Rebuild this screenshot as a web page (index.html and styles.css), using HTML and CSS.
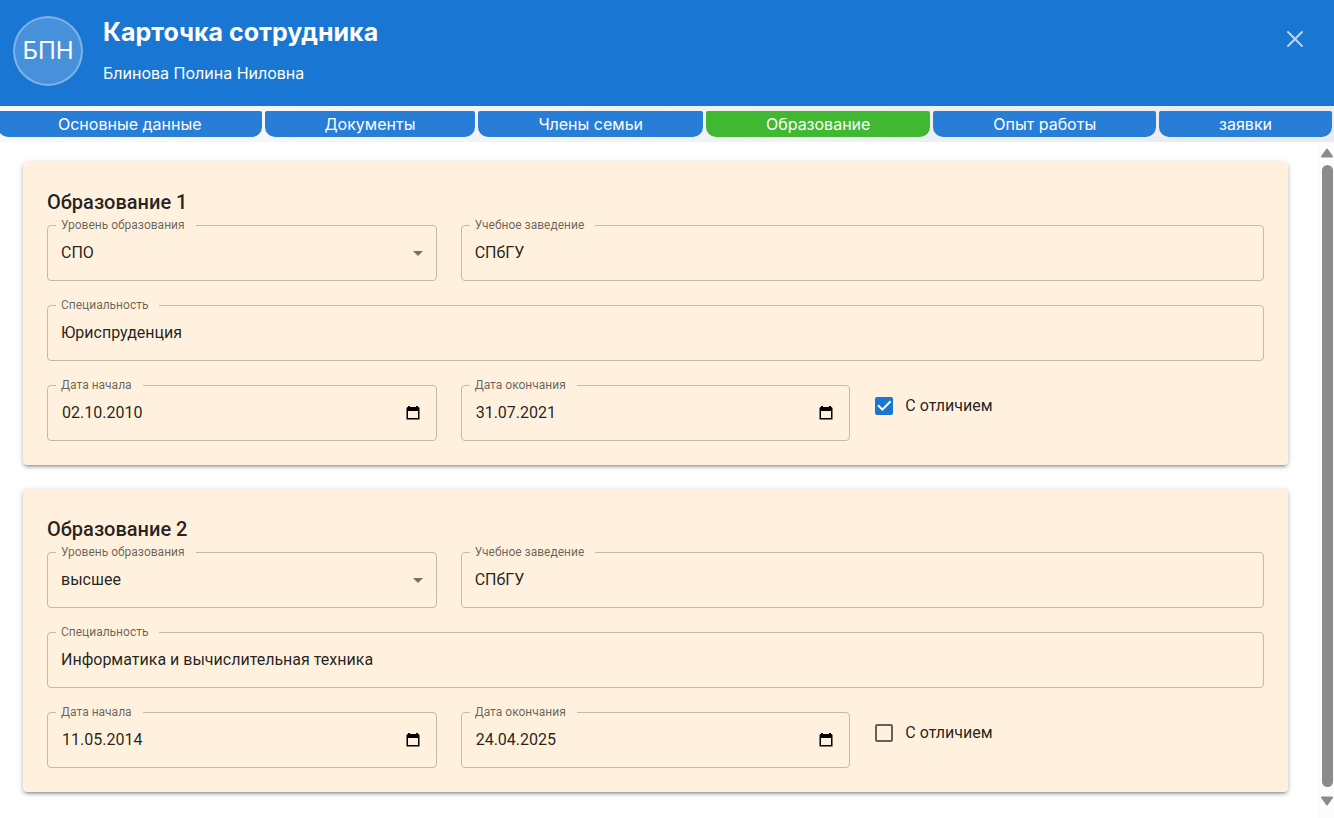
FILE: index.html
```html
<!DOCTYPE html>
<html lang="ru">
<head>
<meta charset="utf-8">
<title>Карточка сотрудника</title>
<link rel="stylesheet" href="styles.css">
</head>
<body>
<header class="header">
  <div class="avatar">БПН</div>
  <div class="person">
    <h1 class="title">Карточка сотрудника</h1>
    <p class="name">Блинова Полина Ниловна</p>
  </div>
  <button class="close" type="button" aria-label="Закрыть">
    <svg width="18" height="18" viewBox="0 0 18 18" fill="none" stroke="currentColor" stroke-width="2" stroke-linecap="round"><path d="M2 2l14 14M16 2L2 16"/></svg>
  </button>
</header>
<nav class="tabbar">
  <div class="tabs">
    <button class="tab" type="button">Основные данные</button>
    <button class="tab" type="button">Документы</button>
    <button class="tab" type="button">Члены семьи</button>
    <button class="tab active" type="button">Образование</button>
    <button class="tab" type="button">Опыт работы</button>
    <button class="tab" type="button">заявки</button>
  </div>
</nav>
<main class="main">
  <div class="cards">
    <section class="card">
      <h2 class="card-title">Образование 1</h2>
      <div class="grid">
        <fieldset class="field">
          <legend class="legend"><label for="level1">Уровень образования</label></legend>
          <div class="control">
            <select class="input" id="level1"><option>СПО</option><option>высшее</option></select>
            <svg class="arrow" width="24" height="24" viewBox="0 0 24 24"><path d="M7 10l5 5 5-5z"/></svg>
          </div>
        </fieldset>
        <fieldset class="field wide">
          <legend class="legend"><label for="school1">Учебное заведение</label></legend>
          <div class="control"><input class="input text" id="school1" type="text" value="СПбГУ"></div>
        </fieldset>
        <fieldset class="field full">
          <legend class="legend"><label for="spec1">Специальность</label></legend>
          <div class="control"><input class="input text" id="spec1" type="text" value="Юриспруденция"></div>
        </fieldset>
        <fieldset class="field">
          <legend class="legend"><label for="start1">Дата начала</label></legend>
          <div class="control">
            <input class="input text date" id="start1" type="text" value="02.10.2010">
            <button class="picker" type="button" aria-label="Выбрать дату"><svg width="14" height="16" viewBox="0 0 14 16"><path fill-rule="evenodd" d="M2 1h2v1h6V1h2v1h0.5l1 1v11.5H.5V3l1-1H2zM2 6v7h10V6z"/></svg></button>
          </div>
        </fieldset>
        <fieldset class="field">
          <legend class="legend"><label for="end1">Дата окончания</label></legend>
          <div class="control">
            <input class="input text date" id="end1" type="text" value="31.07.2021">
            <button class="picker" type="button" aria-label="Выбрать дату"><svg width="14" height="16" viewBox="0 0 14 16"><path fill-rule="evenodd" d="M2 1h2v1h6V1h2v1h0.5l1 1v11.5H.5V3l1-1H2zM2 6v7h10V6z"/></svg></button>
          </div>
        </fieldset>
        <label class="check"><input class="box" type="checkbox" checked>С отличием</label>
      </div>
    </section>
    <section class="card">
      <h2 class="card-title">Образование 2</h2>
      <div class="grid">
        <fieldset class="field">
          <legend class="legend"><label for="level2">Уровень образования</label></legend>
          <div class="control">
            <select class="input" id="level2"><option>высшее</option><option>СПО</option></select>
            <svg class="arrow" width="24" height="24" viewBox="0 0 24 24"><path d="M7 10l5 5 5-5z"/></svg>
          </div>
        </fieldset>
        <fieldset class="field wide">
          <legend class="legend"><label for="school2">Учебное заведение</label></legend>
          <div class="control"><input class="input text" id="school2" type="text" value="СПбГУ"></div>
        </fieldset>
        <fieldset class="field full">
          <legend class="legend"><label for="spec2">Специальность</label></legend>
          <div class="control"><input class="input text" id="spec2" type="text" value="Информатика и вычислительная техника"></div>
        </fieldset>
        <fieldset class="field">
          <legend class="legend"><label for="start2">Дата начала</label></legend>
          <div class="control">
            <input class="input text date" id="start2" type="text" value="11.05.2014">
            <button class="picker" type="button" aria-label="Выбрать дату"><svg width="14" height="16" viewBox="0 0 14 16"><path fill-rule="evenodd" d="M2 1h2v1h6V1h2v1h0.5l1 1v11.5H.5V3l1-1H2zM2 6v7h10V6z"/></svg></button>
          </div>
        </fieldset>
        <fieldset class="field">
          <legend class="legend"><label for="end2">Дата окончания</label></legend>
          <div class="control">
            <input class="input text date" id="end2" type="text" value="24.04.2025">
            <button class="picker" type="button" aria-label="Выбрать дату"><svg width="14" height="16" viewBox="0 0 14 16"><path fill-rule="evenodd" d="M2 1h2v1h6V1h2v1h0.5l1 1v11.5H.5V3l1-1H2zM2 6v7h10V6z"/></svg></button>
          </div>
        </fieldset>
        <label class="check"><input class="box" type="checkbox">С отличием</label>
      </div>
    </section>
  </div>
  <div class="scrollbar" aria-hidden="true">
    <svg width="14" height="10" viewBox="0 0 14 10"><path d="M7 1.5L12 8.5H2z" stroke-width="2" stroke-linejoin="round"/></svg>
    <div class="thumb"></div>
    <svg width="14" height="10" viewBox="0 0 14 10"><path d="M7 8.5L12 1.5H2z" stroke-width="2" stroke-linejoin="round"/></svg>
  </div>
</main>
</body>
</html>
```
FILE: styles.css
```css
* { box-sizing: border-box; }

body {
  margin: 0;
  min-height: 100vh;
  display: flex;
  flex-direction: column;
  background: #fff;
  color: rgba(0, 0, 0, 0.87);
  font: 16px/24px Roboto, "Noto Sans", sans-serif;
  overflow-x: hidden;
}

button { font: inherit; border: 0; padding: 0; cursor: pointer; }

/* Header */
.header {
  display: flex;
  align-items: flex-start;
  gap: 20px;
  padding: 16px 30px 20px 13px;
  background: #1976d2;
  color: #fff;
  font-family: Inter, "Noto Sans", sans-serif;
}

.avatar {
  width: 70px;
  height: 70px;
  flex: none;
  display: grid;
  place-items: center;
  border: 2px solid rgba(255, 255, 255, 0.3);
  border-radius: 50%;
  background: rgba(255, 255, 255, 0.2);
  font-size: 24px;
}

.person { flex: 1; }

.title {
  margin: 0 0 13px;
  font-size: 25px;
  line-height: 32px;
  font-weight: 700;
}

.name { margin: 0; }

.close {
  margin-top: 14px;
  background: none;
  color: rgba(255, 255, 255, 0.7);
  line-height: 0;
}

/* Tabs */
.tabbar {
  padding: 5px 0;
  background: linear-gradient(135deg, #f8f9fa, #e9ecef);
}

.tabs {
  display: flex;
  gap: 3px;
  margin: 0 2px 0 -2px;
}

.tab {
  flex: 1 1 auto;
  height: 26px;
  border-radius: 2px 2px 10px 10px;
  background: #287dd6;
  color: #fff;
  font: 400 16px/26px Inter, "Noto Sans", sans-serif;
}

.tab.active { background: #40b832; }

/* Content */
.main {
  flex: 1;
  display: flex;
}

.cards {
  flex: 1;
  display: flex;
  flex-direction: column;
  gap: 24px;
  padding: 20px 30px 26px 23px;
}

.card {
  padding: 24px;
  border-radius: 4px;
  background: #fff1de;
  box-shadow: 0 3px 3px -2px rgba(0, 0, 0, 0.3), 0 2px 4px 0 rgba(0, 0, 0, 0.16), 0 1px 6px 0 rgba(0, 0, 0, 0.12);
}

.card-title {
  margin: 0;
  font-size: 20px;
  line-height: 32px;
  font-weight: 500;
}

.grid {
  display: grid;
  grid-template-columns: repeat(3, minmax(0, 1fr));
  gap: 17px 24px;
}

.field {
  min-width: 0;
  margin: 0;
  padding: 0 0 7px;
  border: 1px solid #c4baac;
  border-radius: 4px;
}

.wide { grid-column: span 2; }
.full { grid-column: 1 / -1; }

.legend {
  margin-left: 8px;
  padding: 0 11px 0 5px;
  font-size: 12px;
  line-height: 15px;
  height: 15px;
  color: rgba(0, 0, 0, 0.6);
}

.legend label { display: block; }

.control {
  display: flex;
  align-items: center;
  height: 40px;
}

.input {
  flex: 1;
  min-width: 0;
  height: 38px;
  margin: 0;
  padding: 0 13px;
  border: 0;
  outline: 0;
  appearance: none;
  background: none;
  color: inherit;
  font: inherit;
}

.text { padding-bottom: 2px; }

.date { padding-left: 14px; }

.arrow {
  margin: 0 6px 0 -30px;
  fill: rgba(0, 0, 0, 0.54);
  pointer-events: none;
}

.picker {
  margin-right: 16px;
  background: none;
  line-height: 0;
}

.check {
  display: flex;
  align-items: center;
  align-self: start;
  gap: 12px;
  height: 42px;
  margin-top: 7px;
  padding-left: 1px;
}

.box {
  width: 18px;
  height: 18px;
  margin: 0;
  appearance: none;
  border: 2px solid rgba(0, 0, 0, 0.6);
  border-radius: 2px;
}

.box:checked {
  border: 0;
  background: #1976d2;
}

.box:checked::before {
  content: "";
  display: block;
  width: 18px;
  height: 18px;
  background: #fff;
  clip-path: polygon(7px 14px, 2px 9px, 3.4px 7.6px, 7px 11.2px, 14.6px 3.6px, 16px 5px);
}

/* Scrollbar */
.scrollbar {
  width: 16px;
  display: flex;
  flex-direction: column;
  align-items: flex-end;
  gap: 7px;
  padding: 6px 0 12px;
  background: #fcfcfc;
}

.scrollbar svg {
  flex: none;
  fill: #8b8b8b;
  stroke: #8b8b8b;
}

.thumb {
  flex: 1;
  width: 11px;
  margin: 0 1px 2px 0;
  border-radius: 6px;
  background: #8b8b8b;
}
```
